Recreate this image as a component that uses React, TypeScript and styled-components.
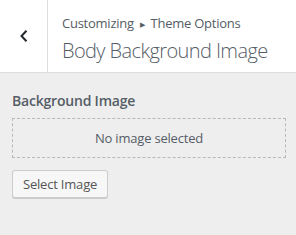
import React from "react";
import styled, { createGlobalStyle } from "styled-components";

const GlobalStyle = createGlobalStyle`
  html, body {
    margin: 0;
    padding: 0;
    background: #eee;
  }
  body {
    font-family: "Open Sans", "Noto Sans", sans-serif;
    color: #555d66;
  }
`;

const Panel = styled.div`
  width: 296px;
  height: 235px;
  background: #eee;
`;

const Header = styled.div`
  display: flex;
  height: 72px;
  background: #fff;
  border-bottom: 1px solid #ddd;
`;

const BackButton = styled.button`
  width: 48px;
  flex: none;
  display: flex;
  align-items: center;
  justify-content: center;
  background: #fff;
  border: none;
  border-right: 1px solid #ddd;
  padding: 0;
  color: #23282d;
`;

const TitleBlock = styled.div`
  display: flex;
  flex-direction: column;
  justify-content: center;
  padding: 2px 10px 0 14px;
  min-width: 0;
`;

const Crumb = styled.span`
  font-size: 13px;
  line-height: 24px;
  color: #555d66;
  white-space: nowrap;
  letter-spacing: -0.25px;
`;

const Arrow = styled.span`
  font-size: 7px;
  margin: 0 6px;
  position: relative;
  top: -1px;
`;

const Title = styled.h3`
  margin: 0;
  font-size: 20px;
  font-weight: 300;
  line-height: 26px;
  color: #555d66;
  white-space: nowrap;
  letter-spacing: -0.6px;
`;

const Section = styled.div`
  padding: 19px 10px 0 12px;
`;

const Label = styled.div`
  font-size: 14px;
  font-weight: 600;
  line-height: 18px;
  color: #555d66;
  margin-bottom: 8px;
  letter-spacing: -0.2px;
`;

const Placeholder = styled.div`
  height: 38px;
  border: 1px dashed #b4b9be;
  display: flex;
  align-items: center;
  justify-content: center;
  font-size: 13px;
  color: #555d66;
  letter-spacing: -0.2px;
`;

const Button = styled.button`
  margin-top: 12px;
  height: 28px;
  padding: 0 10px;
  font-family: inherit;
  font-size: 13px;
  color: #555;
  background: #f7f7f7;
  border: 1px solid #ccc;
  border-radius: 3px;
  box-shadow: 0 1px 0 #ccc;
  letter-spacing: -0.2px;
`;

export default function App() {
  return (
    <Panel>
      <GlobalStyle />
      <Header>
        <BackButton aria-label="Back">
          <svg width="10" height="14" viewBox="0 0 10 14">
            <path d="M7.5 1.8 L2.5 7 L7.5 12.2" fill="none" stroke="currentColor" strokeWidth="2" />
          </svg>
        </BackButton>
        <TitleBlock>
          <Crumb>
            Customizing<Arrow>▶</Arrow>Theme Options
          </Crumb>
          <Title>Body Background Image</Title>
        </TitleBlock>
      </Header>
      <Section>
        <Label>Background Image</Label>
        <Placeholder>No image selected</Placeholder>
        <Button>Select Image</Button>
      </Section>
    </Panel>
  );
}
